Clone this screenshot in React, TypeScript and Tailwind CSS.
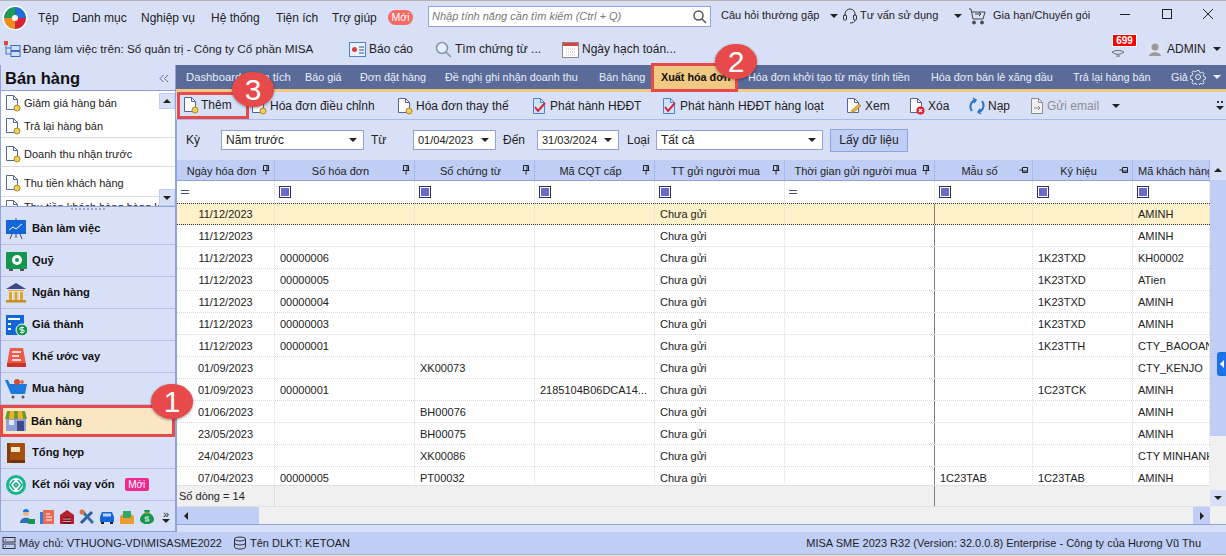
import React from "react";

type IC = { className?: string };
const DocCoin = ({ className = "" }: IC) => (
  <svg width="18" height="18" viewBox="0 0 18 18" className={className}>
    <path d="M2.5 1.5h7l4 4v10h-11z" fill="#fff" stroke="#54659c" />
    <path d="M9.5 1.5v4h4" fill="none" stroke="#54659c" />
    <circle cx="13" cy="14" r="3" fill="#f2cf58" stroke="#a98a25" />
  </svg>
);
const DocCheck = () => (
  <svg width="18" height="18" viewBox="0 0 18 18">
    <path d="M3.5 1.5h7l4 4v11h-11z" fill="#cfe3f8" stroke="#4d86c4" />
    <path d="M10.5 1.5v4h4" fill="none" stroke="#4d86c4" />
    <path d="M5 10l3 4 7-8" fill="none" stroke="#d3263a" strokeWidth="2" />
  </svg>
);
const DocPen = () => (
  <svg width="18" height="18" viewBox="0 0 18 18">
    <path d="M2.5 1.5h7l4 4v10h-11z" fill="#fff" stroke="#54659c" />
    <path d="M9.5 1.5v4h4" fill="none" stroke="#54659c" />
    <path d="M6 16l1-3 7-6 2 2-7 6z" fill="#e5b24a" stroke="#a5741c" strokeWidth=".6" />
  </svg>
);
const DocX = () => (
  <svg width="18" height="18" viewBox="0 0 18 18">
    <path d="M2.5 1.5h7l4 4v10h-11z" fill="#fff" stroke="#54659c" />
    <path d="M9.5 1.5v4h4" fill="none" stroke="#54659c" />
    <circle cx="12.5" cy="13.5" r="4" fill="#e0182d" />
    <path d="M10.8 11.8l3.4 3.4m0-3.4l-3.4 3.4" stroke="#fff" strokeWidth="1.2" />
  </svg>
);
const Refresh = () => (
  <svg width="18" height="18" viewBox="0 0 18 18" fill="none" stroke="#2b76c9" strokeWidth="2">
    <path d="M4 14C1 10 2.500 5 7 3" />
    <path d="M14 4c3 4 1.500 9-3 11" />
    <path d="M5 1l3 2-2 3M13 17l-3-2 2-3" strokeWidth="1.5" />
  </svg>
);
const DocGray = () => (
  <svg width="18" height="18" viewBox="0 0 18 18" fill="none" stroke="#8c8c8c">
    <path d="M3.5 1.5h7l4 4v11h-11z" fill="#f2f2f2" />
    <path d="M10.500 1.500v4h4" />
    <path d="M6 11h6m-2-2l2 2-2 2" />
  </svg>
);
const Caret = ({ className = "" }: IC) => (
  <span className={`inline-block w-0 h-0 border-l-[4px] border-r-[4px] border-t-[4px] border-l-transparent border-r-transparent border-t-[#222] ${className}`} />
);
const Pin = ({ side = false }: { side?: boolean }) =>
  side ? (
    <svg width="10" height="10" viewBox="0 0 10 10" fill="none" stroke="#222"><path d="M.5 5h2.500M3.500 2.500v5h5v-5zM3.500 6h5" /></svg>
  ) : (
    <svg width="10" height="10" viewBox="0 0 10 10" fill="none" stroke="#222"><path d="M2.500.5h5v5h-5zM6 .5v5M1.500 5.500h7M5 5.500v4" /></svg>
  );
const Check = () => (
  <span className="w-[12px] h-[12px] border border-[#2f2f6f] bg-white flex items-center justify-center">
    <span className="w-[8px] h-[8px] bg-[#6a6acb]" />
  </span>
);
const Eq = () => (
  <span className="w-[8px] flex flex-col gap-[2px]">
    <span className="h-px bg-[#4a4a8a]" />
    <span className="h-px bg-[#4a4a8a]" />
  </span>
);
const Badge = ({ n, className }: { n: string; className: string }) => (
  <div className={`absolute w-[42px] h-[35px] rounded-[50%] bg-[#e8494a] text-white text-[30px] leading-none flex items-center justify-center shadow-[0_1px_3px_rgba(0,0,0,0.4)] z-10 ${className}`}>{n}</div>
);

const menus = [
  { t: "Tệp", c: "w-[34px]" },
  { t: "Danh mục", c: "w-[69px]" },
  { t: "Nghiệp vụ", c: "w-[70px]" },
  { t: "Hệ thống", c: "w-[65px]" },
  { t: "Tiện ích", c: "w-[56px]" },
  { t: "Trợ giúp", c: "w-[56px]" },
];
const tabs = [
  { t: "Dashboard phân tích", c: "w-[119px] text-[11.300px]" },
  { t: "Báo giá", c: "w-[55px]" },
  { t: "Đơn đặt hàng", c: "w-[85px]" },
  { t: "Đề nghị ghi nhận doanh thu", c: "w-[154px]" },
  { t: "Bán hàng", c: "w-[52px]" },
];
const tabs2 = [
  { t: "Hóa đơn khởi tạo từ máy tính tiền", c: "w-[183px]" },
  { t: "Hóa đơn bán lẻ xăng dầu", c: "w-[142px]" },
  { t: "Trả lại hàng bán", c: "w-[98px]" },
  { t: "Giả", c: "w-[19px] overflow-hidden" },
];
const columns: [string, "top" | "side"][] = [
  ["Ngày hóa đơn", "top"],
  ["Số hóa đơn", "top"],
  ["Số chứng từ", "top"],
  ["Mã CQT cấp", "top"],
  ["TT gửi người mua", "top"],
  ["Thời gian gửi người mua", "top"],
  ["Mẫu số", "side"],
  ["Ký hiệu", "side"],
  ["Mã khách hàng", "side"],
];
const rows = [
  ["11/12/2023", "", "", "", "Chưa gửi", "", "", "", "AMINH"],
  ["11/12/2023", "", "", "", "Chưa gửi", "", "", "", "AMINH"],
  ["11/12/2023", "00000006", "", "", "Chưa gửi", "", "", "1K23TXD", "KH00002"],
  ["11/12/2023", "00000005", "", "", "Chưa gửi", "", "", "1K23TXD", "ATien"],
  ["11/12/2023", "00000004", "", "", "Chưa gửi", "", "", "1K23TXD", "AMINH"],
  ["11/12/2023", "00000003", "", "", "Chưa gửi", "", "", "1K23TXD", "AMINH"],
  ["11/12/2023", "00000001", "", "", "Chưa gửi", "", "", "1K23TTH", "CTY_BAOOANH"],
  ["01/09/2023", "", "XK00073", "", "Chưa gửi", "", "", "", "CTY_KENJO"],
  ["01/09/2023", "00000001", "", "2185104B06DCA14...", "Chưa gửi", "", "", "1C23TCK", "AMINH"],
  ["01/06/2023", "", "BH00076", "", "Chưa gửi", "", "", "", "AMINH"],
  ["23/05/2023", "", "BH00075", "", "Chưa gửi", "", "", "", "AMINH"],
  ["24/04/2023", "", "XK00086", "", "Chưa gửi", "", "", "", "CTY MINHANH"],
  ["07/04/2023", "00000005", "PT00032", "", "Chưa gửi", "", "1C23TAB", "1C23TAB", "AMINH"],
];
const gridCols = "grid grid-cols-[98px_140px_120px_120px_130px_150px_98px_100px_77px]";

const navIcons: Record<string, React.ReactNode> = {
  "Bàn làm việc": (
    <svg width="22" height="22" viewBox="0 0 22 22"><rect x="1" y="2" width="20" height="14" fill="#1266d9" /><path d="M4 12l4-3 3 2 6-5" fill="none" stroke="#fff" /><path d="M11 0v2M7 16l-2 5M15 16l2 5M11 16v4" stroke="#444" /></svg>
  ),
  "Quỹ": (
    <svg width="22" height="22" viewBox="0 0 22 22"><rect x="1" y="2" width="21" height="17" rx="1" fill="#14964f" /><circle cx="12" cy="10" r="5" fill="#fff" /><circle cx="12" cy="10" r="2" fill="#14964f" /><rect x="4" y="19" width="4" height="2" fill="#555" /><rect x="15" y="19" width="4" height="2" fill="#555" /></svg>
  ),
  "Ngân hàng": (
    <svg width="22" height="22" viewBox="0 0 22 22"><path d="M11 1L1 7h20z" fill="#3d4a80" /><path d="M3 8h16v1H3z" fill="#e3a623" /><path d="M4 10h3v8H4zM9.500 10h3v8h-3zM15 10h3v8h-3z" fill="#e3a623" /><rect x="1" y="18" width="20" height="2.500" fill="#c98d1b" /></svg>
  ),
  "Giá thành": (
    <svg width="22" height="22" viewBox="0 0 22 22"><rect x="1" y="1" width="18" height="20" fill="#1266d9" /><rect x="3" y="4" width="12" height="2" fill="#fff" /><rect x="3" y="9" width="3" height="2" fill="#fff" /><rect x="3" y="14" width="3" height="2" fill="#fff" /><circle cx="17" cy="16" r="6" fill="#14964f" stroke="#fff" /><path d="M19 13.500h-3a1 1 0 000 2.500h2a1 1 0 010 2.500h-3M17 12.500v7" fill="none" stroke="#fff" /></svg>
  ),
  "Khế ước vay": (
    <svg width="22" height="22" viewBox="0 0 22 22"><path d="M5 2h13l3 16H2z" fill="#ec5a4b" /><rect x="2" y="17" width="19" height="4" fill="#c8322b" /><path d="M7 6h9M7 10h7M7 14h9" stroke="#fff" strokeWidth="1.500" /></svg>
  ),
  "Mua hàng": (
    <svg width="24" height="22" viewBox="0 0 24 22"><path d="M1 2h3l2 4h17l-2 10H7z" fill="#1b79e0" /><circle cx="13" cy="4" r="3" fill="#c9503d" /><circle cx="18" cy="4" r="2" fill="#d9734a" /><circle cx="9" cy="19" r="1.500" fill="#555" /><circle cx="19" cy="19" r="1.500" fill="#555" /></svg>
  ),
  "Bán hàng": (
    <svg width="22" height="22" viewBox="0 0 22 22"><rect x="1" y="8" width="20" height="13" fill="#8d9fdc" /><rect x="12" y="11" width="7" height="10" fill="#3c4a8a" /><rect x="4" y="10" width="5" height="5" fill="#e2e8fa" /><path d="M2 1h18l2 8H0z" fill="#6f9a2b" /><path d="M5 1h4v8H4zM13 1h4l1 8h-5z" fill="#efb02f" /></svg>
  ),
  "Tổng hợp": (
    <svg width="22" height="22" viewBox="0 0 22 22"><rect x="2" y="1" width="18" height="19" rx="1" fill="#a6500f" /><rect x="2" y="18" width="18" height="3" fill="#6d3409" /><rect x="6" y="5" width="9" height="5" fill="#f7e7c4" /><rect x="2" y="1" width="3" height="20" fill="#7f3d0b" /></svg>
  ),
  "Kết nối vay vốn": (
    <svg width="22" height="22" viewBox="0 0 22 22"><circle cx="11" cy="11" r="10" fill="#12b58d" /><circle cx="11" cy="11" r="7" fill="#fff" /><path d="M9 6l-4 5 4 5M13 6l4 5-4 5M9 11l2-2 2 2-2 2z" fill="none" stroke="#12a37f" strokeWidth="1.500" /></svg>
  ),
};
const navs = ["Bàn làm việc", "Quỹ", "Ngân hàng", "Giá thành", "Khế ước vay", "Mua hàng", "Bán hàng", "Tổng hợp", "Kết nối vay vốn"];
const toolbar = [
  { i: <DocCoin />, t: "Hóa đơn điều chỉnh", c: "w-[146px]" },
  { i: <DocCoin />, t: "Hóa đơn thay thế", c: "w-[134px]" },
  { i: <DocCheck />, t: "Phát hành HĐĐT", c: "w-[130px]" },
  { i: <DocCheck />, t: "Phát hành HĐĐT hàng loạt", c: "w-[185px]" },
  { i: <DocPen />, t: "Xem", c: "w-[63px]" },
  { i: <DocX />, t: "Xóa", c: "w-[60px]" },
  { i: <Refresh />, t: "Nạp", c: "w-[60px]" },
];
const stripIcons = [
  <svg key="a" width="16" height="16" viewBox="0 0 16 16"><circle cx="7" cy="4" r="3" fill="#e9b48a" /><path d="M4 3a3 3 0 016 0z" fill="#1b79e0" /><path d="M1 14c0-7 12-7 12 0z" fill="#2c6fb5" /><rect x="9" y="10" width="7" height="5" fill="#14964f" /></svg>,
  <svg key="b" width="16" height="16" viewBox="0 0 16 16"><rect x="1" y="3" width="4" height="12" fill="#2d7fd8" /><rect x="4" y="1" width="11" height="14" fill="#ec6a52" /><path d="M7 5h4M7 8h6M7 11h6" stroke="#fff" /></svg>,
  <svg key="c" width="16" height="16" viewBox="0 0 16 16"><path d="M1 15V6l7-5 7 5v9z" fill="#b3212f" /><rect x="4" y="8" width="8" height="7" fill="#7a1420" /><path d="M4 10h8M4 12.500h8" stroke="#e6a0a6" /></svg>,
  <svg key="d" width="16" height="16" viewBox="0 0 16 16"><path d="M2 14L13 3" stroke="#2c5f9f" strokeWidth="3" /><path d="M3 2l11 12" stroke="#3a6ea8" strokeWidth="3" /><circle cx="3" cy="3" r="2.500" fill="#e0703a" /></svg>,
  <svg key="e" width="16" height="16" viewBox="0 0 16 16"><path d="M1 13V8l2-5h10l2 5v5z" fill="#1266d9" /><rect x="4" y="4.500" width="8" height="3" fill="#bcd6f7" /><rect x="2" y="13" width="3" height="2" fill="#222" /><rect x="11" y="13" width="3" height="2" fill="#222" /></svg>,
  <svg key="f" width="16" height="16" viewBox="0 0 16 16"><path d="M1 7l7-5 7 5v8H1z" fill="#ef9a2e" /><rect x="4" y="2" width="8" height="7" fill="#2fa968" /></svg>,
  <svg key="g" width="16" height="16" viewBox="0 0 16 16"><path d="M5 1h6L10 4c3 1 5 4 5 6.500S12 15 8 15s-7-2-7-4.500S3 5 6 4z" fill="#14964f" /><rect x="5.500" y="3.500" width="5" height="1" fill="#e3a623" /><path d="M10 8H7a1 1 0 000 2h2a1 1 0 010 2H6" fill="none" stroke="#fff" /></svg>,
];
const ListItem = ({ t, c }: { t: string; c: string }) => (
  <div className={`flex items-center gap-[2px] pl-[3px] border-b border-[#dcdcdc] whitespace-nowrap text-[11px] ${c}`}>
    <DocCoin className="shrink-0" />
    <span>{t}</span>
  </div>
);
const Combo = ({ t, c }: { t: string; c: string }) => (
  <div className={`h-[20px] bg-white border border-[#8fa3dc] flex items-center justify-between pl-[4px] pr-[6px] ${c}`}>
    <span>{t}</span>
    <Caret />
  </div>
);

export default function App() {
  return (
    <div className="relative w-[1226px] h-[556px] overflow-hidden bg-[#d8e0f8] text-[12px] text-[#222] flex flex-col font-['Liberation_Sans',sans-serif] border-t border-[#b4b4b4]">
      {/* title row */}
      <div className="h-[33px] flex items-center shrink-0">
        <svg width="26" height="26" viewBox="0 0 26 26" className="ml-[2px] mr-[10px]">
          <circle cx="13" cy="13" r="12.500" fill="#fff" />
          <path d="M13 2A11 11 0 002 13h8a3 3 0 013-3z" fill="#1f9b57" />
          <path d="M13 2a11 11 0 0111 11h-8a3 3 0 00-3-3z" fill="#1b6fd6" />
          <path d="M2 13a11 11 0 0011 11v-8a3 3 0 01-3-3z" fill="#f08c1e" />
          <path d="M24 13a11 11 0 01-11 11v-8a3 3 0 003-3z" fill="#d9223a" />
        </svg>
        {menus.map((m) => (
          <span key={m.t} className={`text-[12px] ${m.c}`}>{m.t}</span>
        ))}
        <span className="w-[25px] h-[15px] rounded-full bg-[#f56b63] text-white text-[10.500px] flex items-center justify-center">Mới</span>
        <div className="ml-[15px] w-[283px] h-[21px] bg-white border border-[#8fa3dc] flex items-center justify-between px-[3px] -mt-[3px] text-[11px]">
          <i className="text-[#777]">Nhập tính năng cần tìm kiếm (Ctrl + Q)</i>
          <svg width="15" height="15" viewBox="0 0 15 15" fill="none" stroke="#555" strokeWidth="1.500"><circle cx="6.500" cy="6.500" r="4.500" /><path d="M10 10l4 4" /></svg>
        </div>
        <span className="ml-[10px] w-[109px] -mt-[4px] text-[11px]">Câu hỏi thường gặp</span>
        <Caret className="-mt-[4px]" />
        <svg width="16" height="16" viewBox="0 0 16 16" fill="none" stroke="#333" className="ml-[4px] -mt-[4px]"><path d="M3 8V6a5 5 0 0110 0v2" /><rect x="1.500" y="7" width="3" height="5" rx="1" /><rect x="11.500" y="7" width="3" height="5" rx="1" /><path d="M13 12c0 2-2 3-5 3" /></svg>
        <span className="ml-[2px] w-[94px] -mt-[4px] text-[11px]">Tư vấn sử dụng</span>
        <Caret className="-mt-[4px]" />
        <svg width="18" height="18" viewBox="0 0 18 18" fill="none" stroke="#444" className="ml-[6px] -mt-[4px]"><path d="M1 2h2l2 10h10l2-7H4" /><path d="M7 7h6m-2-2l2 2-2 2" /><circle cx="6" cy="15.500" r="1.500" fill="#555" /><circle cx="14" cy="15.500" r="1.500" fill="#555" /></svg>
        <span className="ml-[7px] w-[127px] -mt-[4px] text-[11px]">Gia hạn/Chuyển gói</span>
        <span className="w-[10px] h-px bg-[#222] -mt-[7px]" />
        <span className="ml-[32px] w-[10px] h-[10px] border border-[#222] -mt-[7px]" />
        <svg width="12" height="12" viewBox="0 0 12 12" stroke="#222" className="ml-[30px] -mt-[7px]"><path d="M1 1l10 10M11 1L1 11" /></svg>
      </div>
      {/* second row */}
      <div className="h-[31px] flex items-center shrink-0 relative pb-[1px]">
        <svg width="18" height="18" viewBox="0 0 18 18" className="ml-[3px] mr-[2px]" fill="none"><rect x="1" y="1" width="4" height="4" fill="#e0463a" /><path d="M3 5v9h5M3 8h5" stroke="#3c6ec9" /><rect x="8" y="5.500" width="9" height="5" stroke="#3c6ec9" fill="#cfe0fb" /><rect x="8" y="11.500" width="9" height="5" stroke="#3c6ec9" fill="#cfe0fb" /></svg>
        <span className="w-[326px] text-[11.700px]">Đang làm việc trên: Sổ quản trị - Công ty Cổ phần MISA</span>
        <svg width="17" height="15" viewBox="0 0 17 15" className="mr-[3px]"><rect x=".5" y=".5" width="16" height="14" fill="#eaf1fc" stroke="#4d86c4" /><circle cx="5.500" cy="7.500" r="2.500" fill="#d9403a" /><path d="M10 5h5M10 8h5M10 11h5" stroke="#35548e" /></svg>
        <span className="w-[66px]">Báo cáo</span>
        <svg width="17" height="17" viewBox="0 0 17 17" fill="#e6effa" stroke="#7f95ad" strokeWidth="1.500" className="mr-[3px]"><circle cx="7" cy="7" r="5.500" /><path d="M11 11l5 5" /></svg>
        <span className="w-[107px]">Tìm chứng từ ...</span>
        <svg width="17" height="17" viewBox="0 0 17 17" className="mr-[3px]"><rect x=".5" y="1.500" width="16" height="15" fill="#fff" stroke="#8a8a8a" /><rect x="1" y="2" width="15" height="3" fill="#d9463f" /><path d="M4 8h9M4 11h9M4 14h9" stroke="#bcbcbc" strokeDasharray="1 1" /></svg>
        <span className="w-[528px]">Ngày hạch toán...</span>
        <svg width="16" height="16" viewBox="0 0 16 16" fill="none" stroke="#666"><path d="M2 11c4 -2 8 -2 12 0-3 3-9 3-12 0zM6 15h4" /></svg>
        <span className="absolute left-[1112px] top-0 h-[13px] w-[25px] bg-[#ff0000] border border-white text-white text-[10px] font-bold flex items-center justify-center">699</span>
        <svg width="16" height="16" viewBox="0 0 16 16" className="ml-[21px] mr-[4px]"><circle cx="8" cy="8" r="8" fill="#dde3f2" /><circle cx="8" cy="6" r="3.500" fill="#9a9a9a" /><path d="M2 15c1-5 11-5 12 0z" fill="#9a9a9a" /></svg>
        <span className="w-[46px]">ADMIN</span>
        <Caret />
      </div>
      {/* middle */}
      <div className="flex h-[467px] shrink-0">
        {/* sidebar */}
        <aside className="w-[176px] shrink-0 border-x border-[#8fa3dc] flex flex-col border-b">
          <div className="h-[25px] flex items-center justify-between pl-[4px] pr-[6px] pt-[1px]">
            <b className="text-[16.500px] text-[#111]">Bán hàng</b>
            <svg width="10" height="9" viewBox="0 0 10 9" fill="none" stroke="#5a6b9a"><path d="M4.500 1L1 4.500 4.500 8M9 1L5.500 4.500 9 8" /></svg>
          </div>
          <div className="relative h-[116px] bg-white overflow-hidden border-t border-[#8fa3dc]">
            <ListItem t="Giảm giá hàng bán" c="h-[24px] border-b-0" />
            <ListItem t="Trả lại hàng bán" c="h-[23px]" />
            <ListItem t="Doanh thu nhận trước" c="h-[29px] pt-[4px]" />
            <ListItem t="Thu tiền khách hàng" c="h-[30px] pt-[3px]" />
            <ListItem t="Thu tiền khách hàng hàng loạt" c="h-[22px]" />
            <span className="absolute right-0 top-[2px] w-[16px] h-[16px] bg-[#d8e0f8] border border-[#c0cef5] flex items-center justify-center"><Caret className="rotate-180" /></span>
            <span className="absolute right-0 bottom-0 w-[16px] h-[17px] bg-[#d8e0f8] border border-[#c0cef5] flex items-center justify-center"><Caret /></span>
          </div>
          <div className="h-[7px] border-t border-[#8fa3dc] flex items-start justify-center shrink-0">
            <span className="w-[34px] h-[3px] mt-[1px] border-t-2 border-dotted border-[#9aa6c8]" />
          </div>
          {navs.map((n) => {
            const on = n === "Bán hàng";
            return (
              <div key={n} className={`flex items-center shrink-0 ${on ? "h-[32px] gap-[3px] bg-[#fbe6c3] border-[3px] border-[#e8494a] -ml-[1px] pl-[1px]" : "h-[32px] gap-[4px] pl-[3px] border-b border-[#b4c3ee]"}`}>
                <span className="w-[24px] flex justify-center shrink-0">{navIcons[n]}</span>
                <b className="text-[#111] text-[11.200px]">{n}</b>
                {n === "Kết nối vay vốn" && (
                  <span className="ml-[6px] w-[24px] h-[13px] rounded-[2px] bg-[#f0288e] text-white text-[10px] flex items-center justify-center">Mới</span>
                )}
              </div>
            );
          })}
          <div className="flex-1 flex items-center justify-end gap-[4px] pr-[5px] pt-[1px]">
            {stripIcons}
            <span className="flex flex-col items-center text-[11px] leading-[9px] ml-[3px]"><span>»</span><Caret /></span>
          </div>
        </aside>
        {/* content */}
        <main className="flex-1 min-w-0 flex flex-col">
          {/* tabs */}
          <div className="h-[27px] shrink-0 bg-[#5a6b9a] border-b-[3px] border-[#f2c983] flex items-center pl-[10px] text-[#e9edf9] text-[10.800px] relative">
            {tabs.map((t) => (
              <span key={t.t} className={`flex whitespace-nowrap ${t.c}`}>{t.t}</span>
            ))}
            <span className="w-[87px] h-[29px] shrink-0 bg-[#f2c983] border-[3px] border-[#e8494a] text-[#111] font-bold flex items-center pl-[7px] mr-[10px] mt-[1px] whitespace-nowrap">Xuất hóa đơn</span>
            {tabs2.map((t) => (
              <span key={t.t} className={`whitespace-nowrap ${t.c}`}>{t.t}</span>
            ))}
            <svg width="16" height="16" viewBox="0 0 16 16" fill="none" stroke="#e9edf9"><circle cx="8" cy="8" r="2.500" /><path d="M6.800 1h2.400l.4 2 1.600.7 1.800-1.100 1.600 1.700-1.100 1.700.7 1.600 2 .4v2.400l-2 .4-.7 1.600 1.100 1.800-1.700 1.600-1.700-1.100-1.600.7-.4 2H6.800l-.4-2-1.600-.7-1.800 1.100-1.600-1.700 1.100-1.700-.7-1.600-2-.4V6.800l2-.4.7-1.600-1.100-1.800 1.700-1.600 1.700 1.100 1.600-.7z" transform="scale(.93) translate(.6 .6)" /></svg>
            <Caret className="ml-[7px] border-t-[#e9edf9]" />
          </div>
          {/* toolbar */}
          <div className="h-[28px] shrink-0 flex items-center border-b border-[#a8bbee]">
            <div className="ml-[1px] w-[72px] h-[27px] -mt-[1px] border-[3px] border-[#e8494a] flex items-center gap-[1px] pl-[2px] mr-[1px]">
              <DocCoin /><span>Thêm</span>
            </div>
            {toolbar.map((b) => (
              <div key={b.t} className={`flex items-center gap-[2px] whitespace-nowrap ${b.c}`}>{b.i}<span>{b.t}</span></div>
            ))}
            <div className="flex items-center gap-[1px] text-[#8e8e8e] w-[84px]"><DocGray /><span>Gửi email</span></div>
            <Caret className="border-t-[#8e8e8e]" />
            <span className="ml-auto mr-[2px] flex flex-col items-center gap-[3px]">
              <span className="w-[6px] border-t-2 border-dotted border-[#333]" />
              <Caret />
            </span>
          </div>
          {/* filter */}
          <div className="h-[40px] shrink-0 flex items-center pl-[9px] border-l border-[#8fa3dc]">
            <span className="w-[35px]">Kỳ</span>
            <Combo t="Năm trước" c="w-[143px]" />
            <span className="ml-[7px] w-[42px]">Từ</span>
            <Combo t="01/04/2023" c="w-[83px] text-[11px]" />
            <span className="ml-[7px] w-[34px]">Đến</span>
            <Combo t="31/03/2024" c="w-[82px] text-[11px]" />
            <span className="ml-[8px] w-[29px]">Loại</span>
            <Combo t="Tất cả" c="w-[167px]" />
            <button className="ml-[7px] w-[78px] h-[23px] bg-[#c0cef5] border border-[#8fa3dc]">Lấy dữ liệu</button>
          </div>
          {/* grid + v scrollbar */}
          <div className="flex flex-1 min-h-0 border-l border-[#8fa3dc] text-[11px]">
            <div className="w-[1033px] shrink-0 flex flex-col">
              <div className={`${gridCols} h-[21px] bg-[#c0cef5] border-b border-[#8fa3dc] shrink-0`}>
                {columns.map(([c, kind], i) => (
                  <div key={c} className={`relative flex items-center justify-center overflow-hidden whitespace-nowrap border-r border-[#a8bbee] pt-[2px] ${i === 8 ? "justify-start pl-[5px]" : "pr-[8px]"}`}>
                    {c}
                    {i < 8 && <span className="absolute right-[3px] top-[5px]"><Pin side={kind === "side"} /></span>}
                  </div>
                ))}
              </div>
              <div className={`${gridCols} h-[22px] bg-white shrink-0`}>
                {columns.map(([c], i) => (
                  <div key={c} className="flex items-center pl-[4px] border-r border-dotted border-[#ddd]">
                    {i === 0 || i === 5 ? <Eq /> : <Check />}
                  </div>
                ))}
              </div>
              <div className="h-[282px] overflow-hidden shrink-0">
                {rows.map((r, ri) => (
                  <div key={ri} className={`${gridCols} h-[22px] ${ri === 0 ? "bg-[#fff1c9] border-y border-dotted border-[#333]" : "bg-white border-b border-dotted border-[#d8d8d8]"}`}>
                    {r.map((v, i) => (
                      <div key={i} className={`flex items-center whitespace-nowrap overflow-hidden pt-[1px] ${i === 0 ? "justify-center" : "pl-[5px]"} ${i === 5 ? "border-r border-[#808080]" : "border-r border-dotted border-[#ddd]"}`}>{v}</div>
                    ))}
                  </div>
                ))}
              </div>
              <div className={`${gridCols} h-[22px] bg-[#f0f0f0] border-y border-[#e0e0e0] shrink-0`}>
                {columns.map(([c], i) => (
                  <div key={c} className={`flex items-center pl-[2px] whitespace-nowrap ${i === 5 ? "border-r border-[#808080]" : i === 0 ? "border-r border-[#dcdcdc]" : ""}`}>
                    {i === 0 ? "Số dòng = 14" : ""}
                  </div>
                ))}
              </div>
              <div className="h-[17px] bg-[#f0f0f0] flex items-center justify-between shrink-0">
                <span className="w-[82px] h-full bg-[#c0cef5] flex items-center pl-[5px]"><Caret className="rotate-90" /></span>
                <span className="w-[17px] h-full bg-[#c0cef5] flex items-center justify-center"><Caret className="-rotate-90" /></span>
              </div>
            </div>
            <div className="flex-1 relative flex flex-col">
              <span className="h-[20px] bg-[#d8e0f8] flex items-center justify-center"><Caret className="rotate-180" /></span>
              <span className="h-[256px] bg-[#c0cef5]" />
              <span className="flex-1 bg-[#f0f0f0]" />
              <span className="h-[16px] bg-[#d8e0f8] flex items-center justify-center"><Caret /></span>
              <span className="h-[18px] bg-[#f0f0f0]" />
            </div>
          </div>
          <div className="h-[8px] shrink-0 border-t border-l border-[#8fa3dc]" />
        </main>
      </div>
      {/* status */}
      <div className="h-[23px] shrink-0 bg-[#c0cef5] border-b border-[#b4b4b4] flex items-center pl-[2px] text-[11px]">
        <svg width="14" height="14" viewBox="0 0 14 14" fill="none" stroke="#333" className="mr-[3px]"><rect x="1" y="1.500" width="12" height="4.500" /><rect x="1" y="8" width="12" height="4.500" /><path d="M3 3.700h1M3 10.200h1" /></svg>
        <span className="w-[214px] whitespace-nowrap">Máy chủ: VTHUONG-VDI\MISASME2022</span>
        <svg width="14" height="14" viewBox="0 0 14 14" fill="none" stroke="#333" className="mr-[3px]"><ellipse cx="7" cy="3" rx="5.500" ry="2" /><path d="M1.500 3v8c0 1 2.500 2 5.500 2s5.500-1 5.500-2V3M1.500 7c0 1 2.500 2 5.500 2s5.500-1 5.500-2" /></svg>
        <span>Tên DLKT: KETOAN</span>
        <span className="ml-auto mr-[25px] whitespace-nowrap">MISA SME 2023 R32 (Version: 32.0.0.8) Enterprise - Công ty của Hương Vũ Thu</span>
      </div>
      {/* overlays */}
      <div className="absolute left-[1217px] top-[351px] w-[9px] h-[24px] bg-[#1a73e8] rounded-l-[3px] flex items-center justify-center">
        <Caret className="rotate-90 border-t-white" />
      </div>
      <Badge n="1" className="left-[151px] top-[383px]" />
      <Badge n="2" className="left-[715px] top-[43px]" />
      <Badge n="3" className="left-[232px] top-[71px]" />
    </div>
  );
}
